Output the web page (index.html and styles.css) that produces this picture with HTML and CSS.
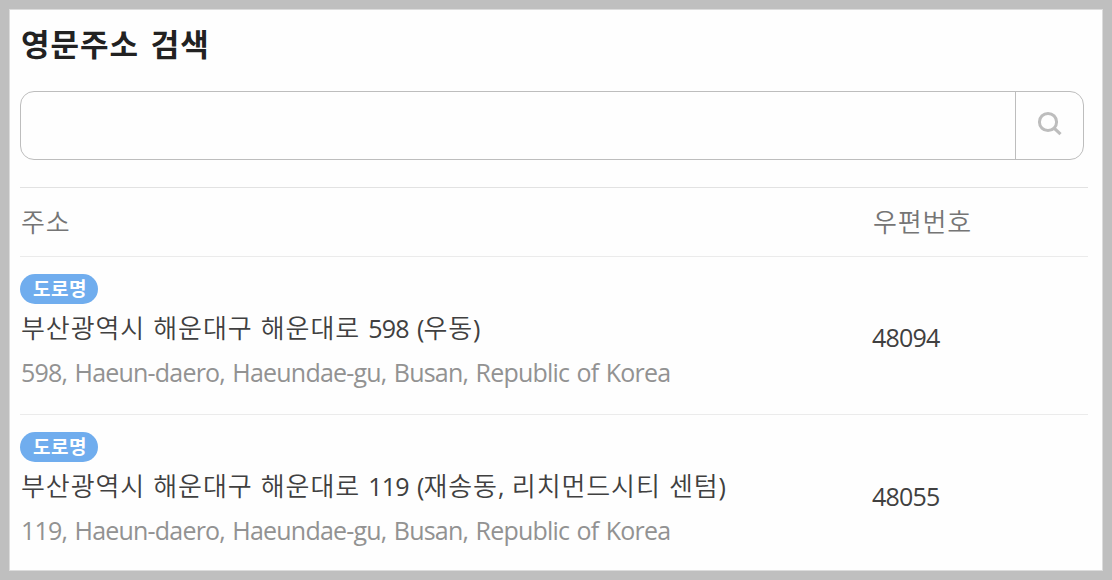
FILE: index.html
```html
<!DOCTYPE html>
<html lang="ko">
<head>
    <meta charset="UTF-8">
    <meta name="viewport" content="width=device-width, initial-scale=1.0">
    <title>영문주소 검색</title>
    <link rel="stylesheet" href="styles.css">
</head>
<body>
    <div class="panel">
        <h1>영문주소 검색</h1>
        <form class="search">
            <input type="text" class="search-input" aria-label="주소">
            <button type="button" class="search-button" aria-label="검색">
                <svg width="26" height="26" viewBox="0 0 26 26" fill="none" stroke="#bdbdbd">
                    <circle cx="11" cy="11" r="8.6" stroke-width="3"/>
                    <path d="M16.8 16.8 L23.5 23.2" stroke-width="3.2"/>
                </svg>
            </button>
        </form>
        <div class="list">
            <div class="row head">
                <div>주소</div>
                <div>우편번호</div>
            </div>
            <div class="row">
                <div class="address">
                    <span class="badge">도로명</span>
                    <p class="korean">부산광역시 해운대구 해운대로 <span class="latin">598 (</span>우동<span class="latin">)</span></p>
                    <p class="english">598, Haeun-daero, Haeundae-gu, Busan, Republic of Korea</p>
                </div>
                <div class="zip">48094</div>
            </div>
            <div class="row">
                <div class="address">
                    <span class="badge">도로명</span>
                    <p class="korean">부산광역시 해운대구 해운대로 <span class="latin">119 (</span>재송동<span class="latin">, </span>리치먼드시티 센텀<span class="latin">)</span></p>
                    <p class="english">119, Haeun-daero, Haeundae-gu, Busan, Republic of Korea</p>
                </div>
                <div class="zip">48055</div>
            </div>
        </div>
    </div>
</body>
</html>
```

FILE: styles.css
```css
* {
    box-sizing: border-box;
}
body {
    margin: 0;
    padding: 9px;
    height: 580px;
    background: #bfbfbf;
    font-family: "Noto Sans CJK KR", sans-serif;
    color: #404040;
}
.panel {
    width: 1094px;
    height: 562px;
    padding: 0 14px 0 10px;
    background: #fefefe;
    border: 1px solid #dcdcdc;
}
h1 {
    margin: 0;
    height: 81px;
    padding-left: 1px;
    line-height: 65px;
    font-size: 31px;
    font-weight: 700;
    letter-spacing: 1px;
    word-spacing: 2px;
    color: #222;
}
.search {
    display: flex;
    width: 1064px;
    height: 69px;
    border: 1px solid #bdbdbd;
    border-radius: 14px;
    overflow: hidden;
}
.search-input {
    flex: 1;
    min-width: 0;
    border: none;
    background: none;
    outline: none;
    padding: 0 16px;
    font-size: 26px;
}
.search-button {
    display: flex;
    align-items: center;
    justify-content: center;
    width: 68px;
    padding: 0 0 4px;
    border: none;
    border-left: 1px solid #bdbdbd;
    background: none;
    cursor: pointer;
}
.list {
    margin-top: 27px;
    border-top: 1px solid #e2e2e2;
}
.row {
    display: grid;
    grid-template-columns: 852px 1fr;
    align-items: center;
    height: 158px;
    border-bottom: 1px solid #ebebeb;
}
.row:last-child {
    border-bottom: none;
}
.head {
    height: 69px;
    padding: 0 0 3px 1px;
    font-size: 26px;
    font-weight: 350;
    letter-spacing: 0.8px;
    color: #757575;
}
.address {
    align-self: start;
    padding-top: 17px;
}
.badge {
    display: block;
    width: 78px;
    height: 30px;
    border-radius: 15px;
    background: #70adee;
    color: #fff;
    font-size: 19px;
    font-weight: 700;
    line-height: 28px;
    letter-spacing: 0.5px;
    padding-left: 2px;
    text-align: center;
}
.korean,
.english {
    margin: 0;
    padding-left: 1px;
    white-space: pre;
}
.korean {
    height: 46px;
    line-height: 46px;
    font-size: 26px;
    font-weight: 350;
    letter-spacing: 0.9px;
}
.latin,
.english,
.zip {
    font-family: "Open Sans", sans-serif;
    font-size: 25px;
    font-weight: 400;
    letter-spacing: -0.8px;
    word-spacing: 1.7px;
}
.korean .latin {
    word-spacing: 2.5px;
}
.english {
    line-height: 44px;
    color: #929292;
}
.zip {
    padding-top: 3px;
}
```
